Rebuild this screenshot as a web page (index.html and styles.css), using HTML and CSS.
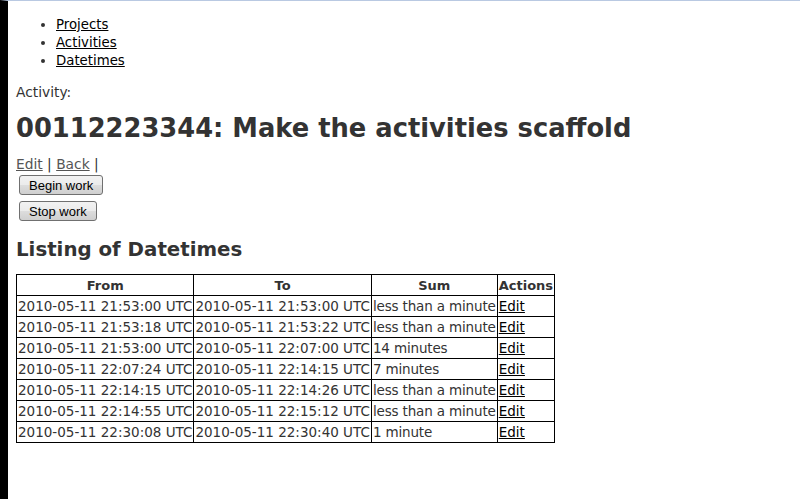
FILE: index.html
```html
<!DOCTYPE html>
<html>
<head>
<meta charset="utf-8">
<link rel="stylesheet" href="styles.css">
</head>
<body>
<div class="frame">
  <div class="page">
    <ul class="nav">
      <li><a href="#">Projects</a></li>
      <li><a href="#">Activities</a></li>
      <li><a href="#">Datetimes</a></li>
    </ul>
    <p class="label">Activity:</p>
    <h1 class="title">00112223344: Make the activities scaffold</h1>
    <p class="links"><a href="#">Edit</a> | <a href="#">Back</a> |</p>
    <div class="btnrow"><button class="btn">Begin work</button></div>
    <div class="btnrow"><button class="btn">Stop work</button></div>
    <h2 class="subtitle">Listing of Datetimes</h2>
    <table class="grid">
      <tr><th>From</th><th>To</th><th>Sum</th><th>Actions</th></tr>
      <tr><td>2010-05-11 21:53:00 UTC</td><td>2010-05-11 21:53:00 UTC</td><td class="sum">less than a minute</td><td><a href="#">Edit</a></td></tr>
      <tr><td>2010-05-11 21:53:18 UTC</td><td>2010-05-11 21:53:22 UTC</td><td class="sum">less than a minute</td><td><a href="#">Edit</a></td></tr>
      <tr><td>2010-05-11 21:53:00 UTC</td><td>2010-05-11 22:07:00 UTC</td><td class="sum">14 minutes</td><td><a href="#">Edit</a></td></tr>
      <tr><td>2010-05-11 22:07:24 UTC</td><td>2010-05-11 22:14:15 UTC</td><td class="sum">7 minutes</td><td><a href="#">Edit</a></td></tr>
      <tr><td>2010-05-11 22:14:15 UTC</td><td>2010-05-11 22:14:26 UTC</td><td class="sum">less than a minute</td><td><a href="#">Edit</a></td></tr>
      <tr><td>2010-05-11 22:14:55 UTC</td><td>2010-05-11 22:15:12 UTC</td><td class="sum">less than a minute</td><td><a href="#">Edit</a></td></tr>
      <tr><td>2010-05-11 22:30:08 UTC</td><td>2010-05-11 22:30:40 UTC</td><td class="sum">1 minute</td><td><a href="#">Edit</a></td></tr>
    </table>
  </div>
</div>
</body>
</html>
```
FILE: styles.css
```css
html, body {
  margin: 0;
  padding: 0;
  background: #fff;
}
.frame {
  border-left: 8px solid #000;
  border-top: 1px solid #b9c9e2;
  min-height: 499px;
  box-sizing: border-box;
}
.page {
  padding: 0 8px;
  font-family: "DejaVu Sans", Verdana, sans-serif;
  font-size: 13.8px;
  color: #333;
}
.nav {
  margin: 15px 0 0;
  padding-left: 40px;
  line-height: 18px;
  font-size: 13.3px;
}
.nav a {
  color: #000;
}
.label {
  margin: 13px 0 0;
  line-height: 18px;
}
.title {
  margin: 10px 0 0;
  font-size: 25.75px;
  line-height: 34px;
}
.links {
  margin: 10px 0 0;
  line-height: 18px;
}
.links a {
  color: #555;
}
.btnrow {
  margin: 2px 0 0 3px;
}
.btnrow + .btnrow {
  margin-top: 6px;
}
.btn {
  font-family: "Liberation Sans", Arial, sans-serif;
  font-size: 13px;
  color: #000;
  padding: 1px 9px;
  height: 20px;
  border: 1px solid #707070;
  border-radius: 3px;
  background: linear-gradient(#f2f2f2, #ebebeb 50%, #dddddd 51%, #cfcfcf);
}
.subtitle {
  margin: 16px 0 0;
  font-size: 19.8px;
  line-height: 26px;
}
.grid {
  margin-top: 11px;
  border-collapse: collapse;
  border: 1px solid #000;
  font-size: 13.5px;
}
.grid th, .grid td {
  border: 1px solid #000;
  padding: 0 1px;
  height: 20px;
  white-space: nowrap;
}
.grid th {
  font-size: 13px;
}
.grid .sum {
  letter-spacing: -0.15px;
}
.grid a {
  color: #000;
}
```
